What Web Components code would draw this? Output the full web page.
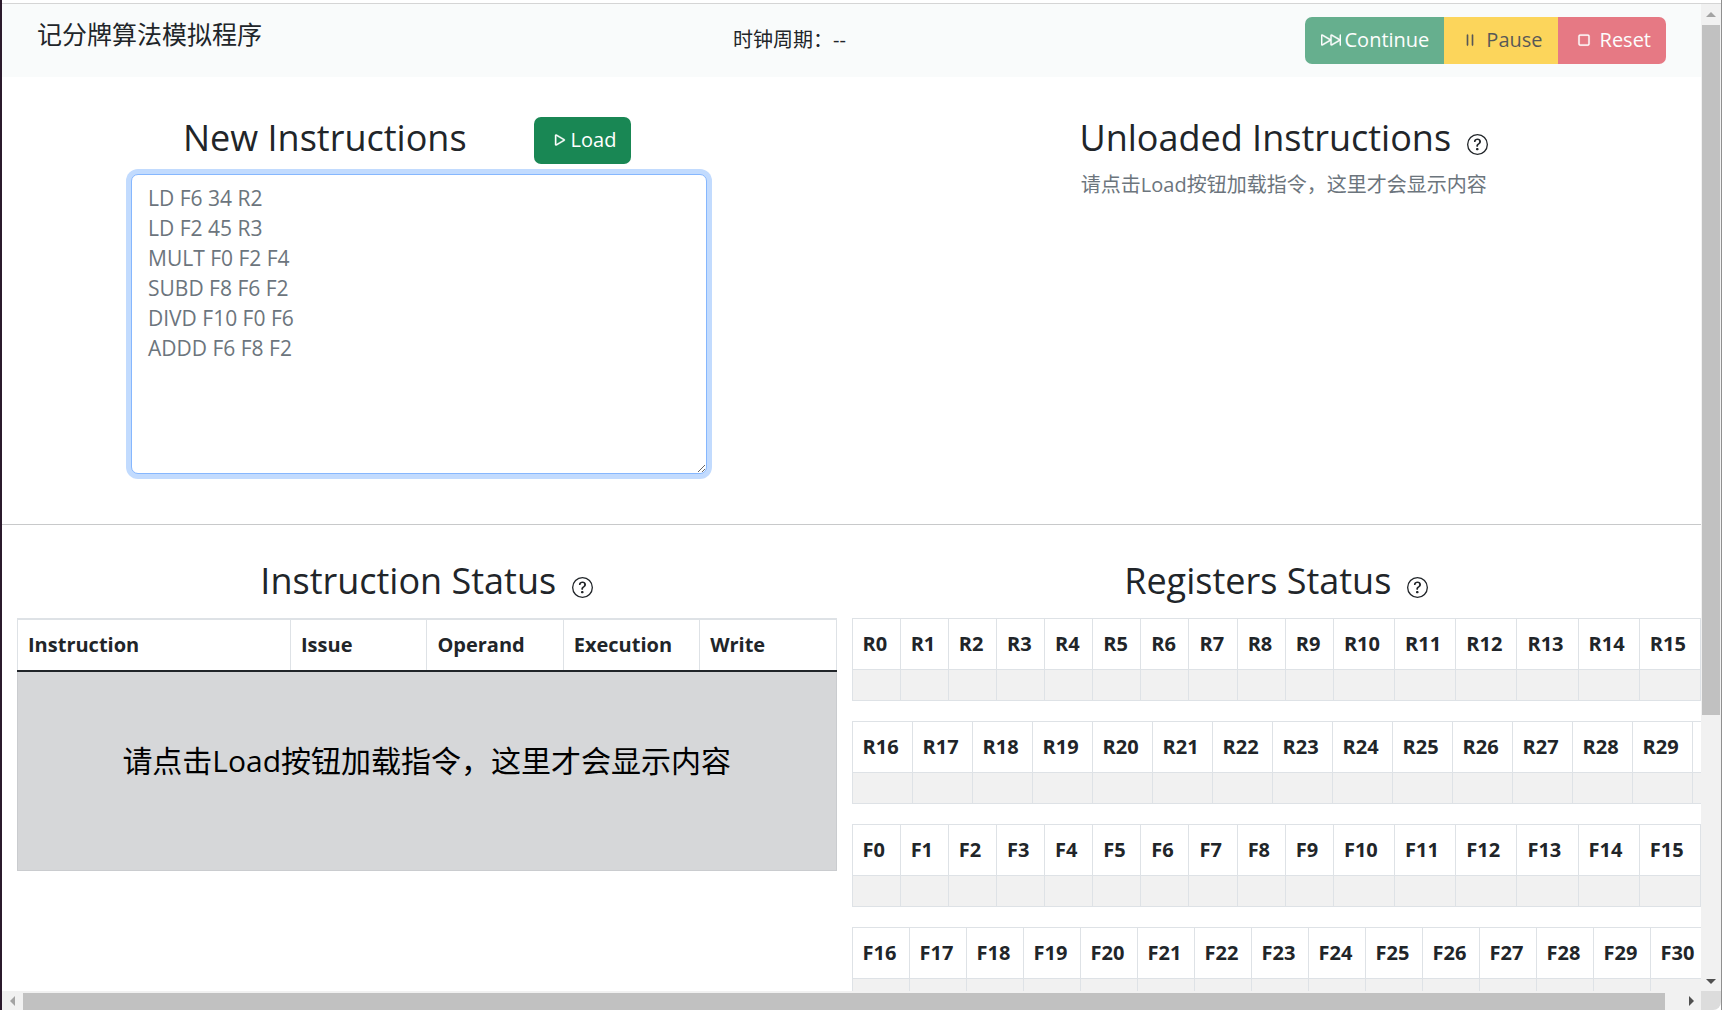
<!DOCTYPE html>
<html lang="zh-CN">
<head>
<meta charset="utf-8">
<title>记分牌算法模拟程序</title>
<style>
html, body { height: 100%; margin: 0; }
body { font: 20px/30px "Open Sans", "Noto Sans CJK SC", sans-serif; color: #212529; background: #fff; overflow: hidden; }
</style>
</head>
<body>
<score-app></score-app>
<script>
function define(name, html) {
  customElements.define(name, class extends HTMLElement {
    connectedCallback() {
      if (this.shadowRoot) return;
      const root = this.attachShadow({ mode: 'open' });
      const t = document.createElement('template');
      t.innerHTML = typeof html === 'function' ? html(this) : html;
      root.append(t.content.cloneNode(true));
    }
  });
}

const ICONS = {
  forward: '<path d="M15.5 3.5a.5.5 0 0 1 .5.5v8a.5.5 0 0 1-1 0V8.752l-6.267 3.636c-.52.302-1.233-.043-1.233-.696v-2.94l-6.267 3.636C.713 12.69 0 12.345 0 11.692V4.308c0-.653.713-.998 1.233-.696L7.5 7.248v-2.94c0-.653.713-.998 1.233-.696L15 7.248V4a.5.5 0 0 1 .5-.5zM1 4.633v6.734L6.804 8 1 4.633zm7.5 0v6.734L14.304 8 8.5 4.633z"/>',
  pause: '<path d="M6 3.5a.5.5 0 0 1 .5.5v8a.5.5 0 0 1-1 0V4a.5.5 0 0 1 .5-.5zm4 0a.5.5 0 0 1 .5.5v8a.5.5 0 0 1-1 0V4a.5.5 0 0 1 .5-.5z"/>',
  stop: '<path d="M3.5 5A1.5 1.5 0 0 1 5 3.5h6A1.5 1.5 0 0 1 12.5 5v6a1.5 1.5 0 0 1-1.5 1.5H5A1.5 1.5 0 0 1 3.5 11V5zM5 4.5a.5.5 0 0 0-.5.5v6a.5.5 0 0 0 .5.5h6a.5.5 0 0 0 .5-.5V5a.5.5 0 0 0-.5-.5H5z"/>',
  play: '<path d="M10.804 8 5 4.633v6.734L10.804 8zm.792-.696a.802.802 0 0 1 0 1.392l-6.363 3.692C4.713 12.69 4 12.345 4 11.692V4.308c0-.653.713-.998 1.233-.696l6.363 3.692z"/>',
  question: '<path d="M8 15A7 7 0 1 1 8 1a7 7 0 0 1 0 14zm0 1A8 8 0 1 0 8 0a8 8 0 0 0 0 16z"/><path d="M5.255 5.786a.237.237 0 0 0 .241.247h.825c.138 0 .248-.113.266-.25.09-.656.54-1.134 1.342-1.134.686 0 1.314.343 1.314 1.168 0 .635-.374.927-.965 1.371-.673.489-1.206 1.06-1.168 1.987l.003.217a.25.25 0 0 0 .25.246h.811a.25.25 0 0 0 .25-.25v-.105c0-.718.273-.927 1.01-1.486.609-.463 1.244-.977 1.244-2.056 0-1.511-1.276-2.241-2.673-2.241-1.267 0-2.655.59-2.75 2.286zm1.557 5.763c0 .533.425.927 1.01.927.609 0 1.028-.394 1.028-.927 0-.552-.42-.94-1.029-.94-.584 0-1.009.388-1.009.94z"/>'
};

define('ui-icon', el => `<style>
:host { display: block; width: 20px; height: 20px; flex: none; }
svg { display: block; width: 100%; height: 100%; fill: currentColor; stroke: currentColor; stroke-width: var(--stroke, 0); }
</style><svg viewBox="0 0 16 16" aria-hidden="true">${ICONS[el.getAttribute('name')]}</svg>`);

define('ui-button', el => `<style>
:host { display: block; }
button { display: flex; align-items: center; gap: var(--gap, 4px); box-sizing: border-box; height: 47px; padding: 0 15px 2px 16px;
  border: 0; border-radius: var(--radius, 7px); font: inherit; font-weight: var(--weight, 500); color: var(--ink, #fff); background: var(--fill, #198754); }
button:disabled { opacity: .65; }
ui-icon { --stroke: .3px; }
</style><button type="button" ${el.hasAttribute('disabled') ? 'disabled' : ''}><ui-icon name="${el.getAttribute('icon')}"></ui-icon><span><slot></slot></span></button>`);

define('top-bar', `<style>
:host { display: grid; grid-template-columns: 696px 1fr auto; box-sizing: border-box; height: 73px; padding: 13px 35px 0; background: #f9fbfb; align-items: start; }
h1 { margin: 0; font-size: 25px; line-height: 34px; font-weight: 400; }
p { margin: 8px 0 0; }
.group { display: flex; }
</style>
<h1>记分牌算法模拟程序</h1>
<p>时钟周期：--</p>
<div class="group" role="group">
<ui-button disabled icon="forward" style="--radius:7px 0 0 7px">Continue</ui-button>
<ui-button disabled icon="pause" style="--fill:#ffc107;--ink:#000;--radius:0;--gap:6px;--weight:400">Pause</ui-button>
<ui-button disabled icon="stop" style="--fill:#dc3545;--radius:0 7px 7px 0;--gap:6px">Reset</ui-button>
</div>`);

define('section-title', el => `<style>
:host { display: flex; justify-content: center; align-items: center; gap: 16px; }
h2 { margin: 0 0 6px; font-size: 36px; line-height: 42px; font-weight: 400; }
ui-icon { width: 21px; height: 21px; margin-top: 6px; }
</style><h2><slot></slot></h2>${el.hasAttribute('help') ? '<ui-icon name="question"></ui-icon>' : ''}`);

define('instruction-loader', `<style>
:host { display: block; width: 576px; max-width: 100%; }
.head { display: flex; align-items: center; gap: 67px; padding-left: 52px; height: 47px; }
textarea { display: block; box-sizing: border-box; width: 100%; height: 300px; margin-top: 10px; padding: 8px 16px; border: 1px solid #86b7fe;
  border-radius: 7px; outline: 0; box-shadow: 0 0 0 5px #c2dbfe; font: inherit; font-size: 21px; color: #212529; background: #fff; resize: both; }
textarea::placeholder { color: #6c757d; opacity: 1; }
</style>
<div class="head"><section-title>New Instructions</section-title><ui-button icon="play" style="--gap:1px">Load</ui-button></div>
<textarea aria-label="New Instructions" placeholder="LD F6 34 R2&#10;LD F2 45 R3&#10;MULT F0 F2 F4&#10;SUBD F8 F6 F2&#10;DIVD F10 F0 F6&#10;ADDD F6 F8 F2"></textarea>`);

define('unloaded-list', `<style>
:host { display: block; text-align: center; }
p { margin: 5px 0 0; color: #6c757d; }
</style><section-title help>Unloaded Instructions</section-title><p>请点击Load按钮加载指令，这里才会显示内容</p>`);

define('instruction-status', `<style>
:host { display: block; }
table { width: 100%; margin-top: 10px; table-layout: fixed; border-collapse: collapse; }
th { box-sizing: border-box; height: 52px; padding: 0 10px; border: 1px solid #dee2e6; border-top-width: 2px; border-bottom: 2px solid #212529; text-align: left; font-weight: 700; }
th:first-child { width: 273px; }
td { box-sizing: border-box; height: 199px; padding: 0 0 20px; border: 1px solid #cacccf; background: #d6d7d9; color: #000; text-align: center; font-size: 30px; line-height: 45px; }
</style><section-title help>Instruction Status</section-title>
<table><thead><tr><th>Instruction</th><th>Issue</th><th>Operand</th><th>Execution</th><th>Write</th></tr></thead>
<tbody><tr><td colspan="5">请点击Load按钮加载指令，这里才会显示内容</td></tr></tbody></table>`);

define('register-table', el => {
  const from = +el.getAttribute('from'), prefix = el.getAttribute('prefix'), wide = el.getAttribute('wide') || 61;
  const ids = Array.from({ length: 16 }, (_, i) => from + i);
  const total = ids.reduce((s, n) => s + (n < 10 ? 48 : +wide), 0);
  return `<style>
:host { display: block; }
table { width: 100%; min-width: ${total}px; table-layout: fixed; border-collapse: collapse; }
th, td { box-sizing: border-box; padding: 0 0 0 10px; border: 1px solid #dee2e6; text-align: left; }
th { height: 51px; font-weight: 700; }
td { height: 31px; background: #f1f1f1; }
</style><table><colgroup>${ids.map(n => `<col style="width:${n < 10 ? 48 : wide}px">`).join('')}</colgroup>
<thead><tr>${ids.map(n => `<th>${prefix}${n}</th>`).join('')}</tr></thead><tbody><tr>${ids.map(() => '<td></td>').join('')}</tr></tbody></table>`;
});

define('registers-status', `<style>
:host { display: block; min-width: 0; }
.tables { display: grid; grid-template-columns: minmax(0, 1fr); gap: 20px; margin-top: 10px; }
</style><section-title help>Registers Status</section-title>
<div class="tables">
<register-table prefix="R" from="0"></register-table>
<register-table prefix="R" from="16" wide="60"></register-table>
<register-table prefix="F" from="0"></register-table>
<register-table prefix="F" from="16" wide="57"></register-table>
</div>`);

define('scroll-bar', `<style>
:host { display: flex; background: #f1f1f1; }
:host([vertical]) { flex-direction: column; }
.end { flex: none; width: 21px; height: 21px; display: grid; place-items: center; color: #505050; }
.end.off { color: #a3a3a3; }
:host([vertical]) .end { width: 19px; }
:host(:not([vertical])) .end { height: 19px; }
svg { width: 10px; height: 10px; fill: currentColor; }
:host([vertical]) svg { transform: rotate(90deg); }
.thumb { background: #c1c1c1; margin: 2px 0 0; flex: var(--thumb, 1) 0 0; }
:host([vertical]) .thumb { margin: 0 1px; }
.rest { flex: var(--rest, 0) 0 0; }
</style><span class="end off"><svg viewBox="0 0 10 10"><path d="M7 0v10L2 5z"/></svg></span><span class="thumb"></span><span class="rest"></span><span class="end"><svg viewBox="0 0 10 10"><path d="M3 0v10l5-5z"/></svg></span>`);

define('score-app', `<style>
:host { display: grid; box-sizing: border-box; height: 100vh; padding-top: 3px; border-left: 2px solid #2b1a2c; border-right: 1px solid #8f8f8f;
  grid-template: minmax(0, 1fr) 19px / minmax(0, 1fr) 20px; }
.view, .v { border-top: 1px solid #d5d5d5; }
.view { overflow: hidden; }
.top { display: grid; grid-template-columns: 1fr 1fr; padding: 40px 0 50px; border-bottom: 1px solid #c8c9ca; }
instruction-loader { margin-left: 129px; }
unloaded-list { padding-left: 15px; }
.status { display: grid; grid-template-columns: minmax(0, 1fr) minmax(0, 1fr); padding-top: 35px; }
instruction-status { padding: 0 15px; }
.v { --thumb: 689; --rest: 255; }
.h { --thumb: 1642; --rest: 15; }
.corner { background: #dcdcdc; border-bottom-right-radius: 8px; }
</style>
<main class="view"><top-bar></top-bar>
<section class="top"><instruction-loader></instruction-loader><unloaded-list></unloaded-list></section>
<section class="status"><instruction-status></instruction-status><registers-status></registers-status></section></main>
<scroll-bar class="v" vertical></scroll-bar><scroll-bar class="h"></scroll-bar><div class="corner"></div>`);
</script>
</body>
</html>
